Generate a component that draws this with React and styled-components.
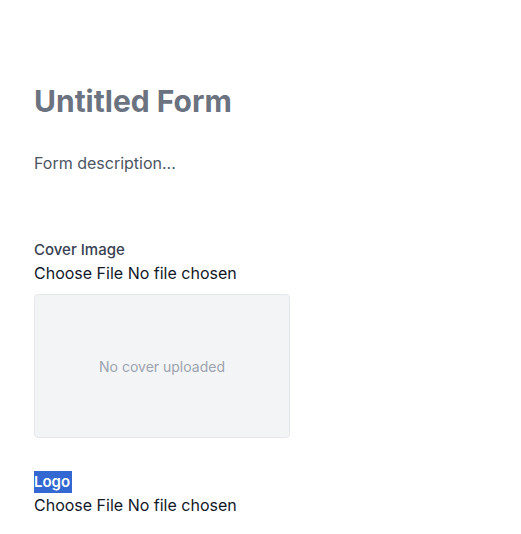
import React from 'react'
import styled, { createGlobalStyle } from 'styled-components'

const GlobalStyle = createGlobalStyle`
  body {
    margin: 0;
    background: #ffffff;
    font-family: Inter, "Liberation Sans", sans-serif;
  }
`

const Page = styled.div`
  padding: 80px 34px 0;
  display: flex;
  flex-direction: column;
`

const Title = styled.h1`
  margin: 0;
  font-size: 30px;
  line-height: 42px;
  font-weight: 700;
  color: #6b7280;
`

const Description = styled.p`
  margin: 30px 0 0;
  font-size: 16px;
  line-height: 22px;
  color: #4b5563;
`

const Field = styled.div`
  display: flex;
  flex-direction: column;
  margin-top: ${p => p.gap}px;
`

const Label = styled.label`
  align-self: flex-start;
  font-size: 15px;
  line-height: 22px;
  font-weight: ${p => (p.selected ? 600 : 500)};
  padding-right: ${p => (p.selected ? 2 : 1)}px;
  background: ${p => (p.selected ? '#3367d1' : 'transparent')};
  color: ${p => (p.selected ? '#ffffff' : '#374151')};
`

const FileInput = styled.div`
  font-size: 16px;
  line-height: 24px;
  color: #111827;
`

const CoverBox = styled.div`
  margin-top: 9px;
  width: 256px;
  height: 144px;
  box-sizing: border-box;
  border: 1px solid #e5e7eb;
  border-radius: 4px;
  background: #f3f4f6;
  display: flex;
  align-items: center;
  justify-content: center;
  font-size: 14px;
  color: #9ca3af;
`

const FilePicker = () => (
  <FileInput>
    <span>Choose File</span> <span>No file chosen</span>
  </FileInput>
)

export default function App() {
  return (
    <>
      <GlobalStyle />
      <Page>
        <Title>Untitled Form</Title>
        <Description>Form description...</Description>
        <Field gap={65}>
          <Label>Cover Image</Label>
          <FilePicker />
          <CoverBox>No cover uploaded</CoverBox>
        </Field>
        <Field gap={33}>
          <Label selected>Logo</Label>
          <FilePicker />
        </Field>
      </Page>
    </>
  )
}
